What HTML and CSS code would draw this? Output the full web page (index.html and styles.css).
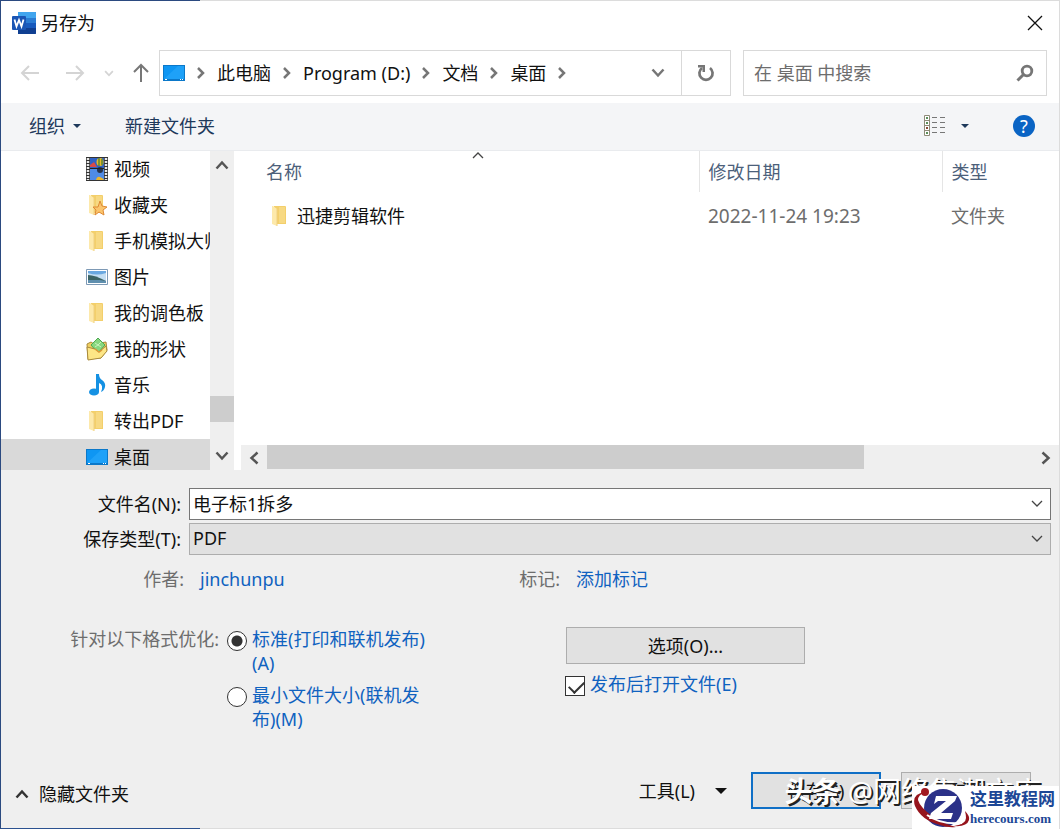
FILE: index.html
```html
<!DOCTYPE html>
<html lang="zh-CN">
<head>
  <meta charset="UTF-8" />
  <meta name="viewport" content="width=device-width, initial-scale=1.0"/>
  <title>另存为</title>
  <link rel="stylesheet" href="styles.css">
</head>
<body>
  <!-- shared icons -->
  <svg class="sprite" aria-hidden="true">
    <symbol id="folder" viewBox="0 0 22 22">
      <path d="M5 1h11q1 0 1 1v17H6z" fill="#f3cf6b"/>
      <path d="M10 2h6v16h-6z" fill="#f7d983"/>
      <path d="M3 1h1l4 3v17l-5-2z" fill="#fde9ab"/>
      <path d="M8 4v17" stroke="#f0d080" fill="none"/>
    </symbol>
    <symbol id="desktop" viewBox="0 0 22 16">
      <path d="M0 0h22v16H0z" fill="#0b78c9"/>
      <path d="M1 1h20v13H1z" fill="#0e96f3"/>
      <path d="M1 14L15 1h6v13z" fill="#1ea1f8"/>
      <path d="M2 14.500h2M17 14.500h1M19 14.500h1" stroke="#fff"/>
    </symbol>
    <symbol id="crumb" viewBox="0 0 8 12">
      <path d="M1 1l5 5-5 5" fill="none" stroke="#767676" stroke-width="2.500"/>
    </symbol>
    <symbol id="down" viewBox="0 0 12 8">
      <path d="M1 1l5 5 5-5" fill="none" stroke="#444" stroke-width="1.300"/>
    </symbol>
    <symbol id="thick" viewBox="0 0 14 10">
      <path d="M1.500 1.500L7 7.500l5.500-6" fill="none" stroke="currentColor" stroke-width="2.500"/>
    </symbol>
    <symbol id="caret" viewBox="0 0 12 6">
      <path d="M0 0h12L6 6z" fill="currentColor"/>
    </symbol>
  </svg>

  <div class="dialog">
    <header class="titlebar">
      <svg class="word" viewBox="0 0 24 22">
        <rect x="6" width="18" height="22" rx="1" fill="#185abd"/>
        <path d="M6 0h17q1 0 1 1v5H6z" fill="#41a5ee"/>
        <path d="M6 6h18v5H6z" fill="#2b7cd3"/>
        <path d="M6 16h18v5q0 1-1 1H6z" fill="#103f91"/>
        <rect y="4" width="14" height="14" rx="1" fill="#1a55b4"/>
        <path d="M2.500 7.500l2 7L7 8l2.500 6.500 2-7" fill="none" stroke="#fff" stroke-width="1.800"/>
      </svg>
      <h1>另存为</h1>
      <button class="close" aria-label="关闭">
        <svg width="16" height="16" viewBox="0 0 16 16"><path d="M1 1l14 14M15 1L1 15" stroke="#111" stroke-width="1.300"/></svg>
      </button>
    </header>

    <div class="navbar">
      <div class="history">
        <button aria-label="后退" disabled><svg width="20" height="16" viewBox="0 0 20 16"><path d="M19 8H2M9 1L2 8l7 7" fill="none" stroke="#d4d4d4" stroke-width="2"/></svg></button>
        <button aria-label="前进" disabled><svg width="20" height="16" viewBox="0 0 20 16"><path d="M1 8h17M11 1l7 7-7 7" fill="none" stroke="#d4d4d4" stroke-width="2"/></svg></button>
        <button class="recent" aria-label="最近" disabled><svg width="10" height="7"><use href="#thick"/></svg></button>
        <button aria-label="上移"><svg width="16" height="20" viewBox="0 0 16 20"><path d="M8 19V2M1 9l7-7 7 7" fill="none" stroke="#777" stroke-width="2"/></svg></button>
      </div>
      <div class="address">
        <nav class="crumbs">
          <svg width="22" height="16"><use href="#desktop"/></svg>
          <svg width="8" height="12"><use href="#crumb"/></svg>
          <a href="#">此电脑</a>
          <svg width="8" height="12"><use href="#crumb"/></svg>
          <a href="#">Program (D:)</a>
          <svg width="8" height="12"><use href="#crumb"/></svg>
          <a href="#">文档</a>
          <svg width="8" height="12"><use href="#crumb"/></svg>
          <a href="#">桌面</a>
          <svg width="8" height="12"><use href="#crumb"/></svg>
        </nav>
        <button class="previous" aria-label="以前的位置"><svg width="14" height="10"><use href="#thick"/></svg></button>
        <button class="refresh" aria-label="刷新">
          <svg width="18" height="18" viewBox="0 0 18 18">
            <path d="M13 4A6.600 6.600 0 1 1 5 4" fill="none" stroke="#767676" stroke-width="2.700"/>
            <path d="M1 1h7v7H5.500V3.500H1z" fill="#767676"/>
          </svg>
        </button>
      </div>
      <div class="search">
        <input type="text" placeholder="在 桌面 中搜索" aria-label="搜索">
        <svg width="18" height="18" viewBox="0 0 18 18"><circle cx="11" cy="7" r="4.800" fill="none" stroke="#767676" stroke-width="2.800"/><path d="M8 10l-6.500 6.500" stroke="#767676" stroke-width="3"/></svg>
      </div>
    </div>

    <div class="toolbar">
      <button>组织 <svg width="8" height="4"><use href="#caret"/></svg></button>
      <button>新建文件夹</button>
      <div class="tools-right">
        <button class="view" aria-label="更改视图">
          <svg width="22" height="22" viewBox="0 0 22 22">
            <path d="M.5.5h5v20h-5zM.5 5.500h5M.5 10.500h5M.5 15.500h5" fill="#fff" stroke="#8f8b78"/>
            <path d="M2 3h2M2 8h2M2 18h2" stroke="#5b8f5b" stroke-width="2"/>
            <path d="M2 13h2" stroke="#8a4a3a" stroke-width="2"/>
            <path d="M8 2.500h5M16 2.500h5M8 7.500h5M16 7.500h5M8 12.500h5M16 12.500h5M8 17.500h5M16 17.500h5" stroke="#777"/>
          </svg>
          <svg width="8" height="4"><use href="#caret"/></svg>
        </button>
        <button class="help" aria-label="帮助">?</button>
      </div>
    </div>

    <main class="browser">
      <ul class="tree">
        <li><a href="#">
          <svg width="22" height="24" viewBox="0 0 22 24">
            <path d="M0 0h22v24H0z" fill="#333"/>
            <path d="M2 1v22M20 1v22" stroke="#e8e8e8" stroke-width="2.500" stroke-dasharray="2 1"/>
            <path d="M4 1h14v10H4z" fill="#2f62c4"/>
            <path d="M4 12h14v11H4z" fill="#4f8be6"/>
            <path d="M4 8l4-3 3 5H4z" fill="#d84b48"/>
            <ellipse cx="14" cy="5" rx="3.500" ry="4" fill="#e5b82c"/>
            <path d="M13 1v8M16 2v6" stroke="#397a33" stroke-width="1.200"/>
            <ellipse cx="14" cy="13" rx="3" ry="3" fill="#26334d"/>
            <path d="M10 23q1-4 4-3t4 3z" fill="#ecb52b"/>
            <path d="M4 11.500h14" stroke="#222"/>
          </svg>视频</a></li>
        <li><a href="#">
          <svg width="22" height="22" viewBox="0 0 22 22">
            <use href="#folder" width="22" height="22"/>
            <path d="M14 7l2 5 5 1-4 3 1 5-5-3-4 3 1-5-3-3h5z" fill="#fbc56d" stroke="#de8a35"/>
          </svg>收藏夹</a></li>
        <li><a href="#"><svg width="22" height="22"><use href="#folder"/></svg>手机模拟大师</a></li>
        <li><a href="#">
          <svg width="22" height="16" viewBox="0 0 22 16">
            <path d="M.5.5h21v15H.5z" fill="#fff" stroke="#7d99b5"/>
            <path d="M2 2h18v12H2z" fill="#c3def3"/>
            <path d="M2 2h18v2q-9 3-18 0z" fill="#6aa8e0"/>
            <path d="M2 6q7 0 18 6v2H2z" fill="#3c6464"/>
            <path d="M2 11h12l6 1v2H2z" fill="#5f8fae"/>
          </svg>图片</a></li>
        <li><a href="#"><svg width="22" height="22"><use href="#folder"/></svg>我的调色板</a></li>
        <li><a href="#">
          <svg width="22" height="24" viewBox="0 0 22 24">
            <path d="M1 7l4-2 3 2 12-2 1 8-6 8-13 1z" fill="#f0cf61" stroke="#a98a3c"/>
            <path d="M5 8l7-7 7 7-7 8z" fill="#87d77f" stroke="#4ea953"/>
            <path d="M9 6l3 2 3-3M9 10l3-2 3 2" fill="none" stroke="#c8f3bd"/>
            <path d="M1 10l8 2 4 3 7-6 1 5-6 7-13 2z" fill="#fde686" stroke="#a98a3c"/>
            <path d="M9 12l4 3 3-2" fill="none" stroke="#dc9b38" stroke-width="1.500"/>
          </svg>我的形状</a></li>
        <li><a href="#">
          <svg width="22" height="22" viewBox="0 0 22 22">
            <ellipse cx="8" cy="18" rx="5" ry="3.600" fill="#1591e3"/>
            <path d="M10 0h3q0 4 3 6 4 3 3 7-1 4-4 5 3-7-2-9v9h-3z" fill="#1591e3"/>
          </svg>音乐</a></li>
        <li><a href="#"><svg width="22" height="22"><use href="#folder"/></svg>转出PDF</a></li>
        <li><a class="selected" href="#"><svg width="22" height="16"><use href="#desktop"/></svg>桌面</a></li>
      </ul>
      <div class="vscroll">
        <button class="flip" aria-label="向上滚动"><svg width="14" height="10"><use href="#thick"/></svg></button>
        <div class="vthumb"></div>
        <button aria-label="向下滚动"><svg width="14" height="10"><use href="#thick"/></svg></button>
      </div>

      <section class="files">
        <table>
          <thead>
            <tr>
              <th>名称<svg class="sort flip" width="12" height="8"><use href="#down"/></svg></th>
              <th class="date">修改日期</th>
              <th class="type">类型</th>
            </tr>
          </thead>
          <tbody>
            <tr>
              <td><a href="#"><svg width="22" height="22"><use href="#folder"/></svg>迅捷剪辑软件</a></td>
              <td class="modified">2022-11-24 19:23</td>
              <td>文件夹</td>
            </tr>
          </tbody>
        </table>
        <div class="hscroll">
          <button class="left" aria-label="向左滚动"><svg width="14" height="10"><use href="#thick"/></svg></button>
          <div class="htrack"><div class="hthumb"></div></div>
          <button class="right" aria-label="向右滚动"><svg width="14" height="10"><use href="#thick"/></svg></button>
        </div>
      </section>
    </main>

    <form class="save-form" onsubmit="return false">
      <div class="field">
        <label for="filename">文件名(N):</label>
        <div class="combo">
          <input type="text" id="filename" value="电子标1拆多">
          <svg width="12" height="8"><use href="#down"/></svg>
        </div>
      </div>
      <div class="field">
        <label for="filetype">保存类型(T):</label>
        <div class="combo">
          <select id="filetype"><option>PDF</option></select>
          <svg width="12" height="8"><use href="#down"/></svg>
        </div>
      </div>

      <div class="meta">
        <div class="meta-item"><span>作者:</span><a href="#">jinchunpu</a></div>
        <div class="meta-item tags"><span>标记:</span><a href="#">添加标记</a></div>
      </div>

      <div class="options">
        <div class="optimize" role="radiogroup" aria-labelledby="optimize-label">
          <span id="optimize-label">针对以下格式优化:</span>
          <div class="radios">
            <label><input type="radio" name="optimize" checked><span>标准(打印和联机发布)(A)</span></label>
            <label><input type="radio" name="optimize"><span>最小文件大小(联机发布)(M)</span></label>
          </div>
        </div>
        <div class="extras">
          <button class="push">选项(O)...</button>
          <label><input type="checkbox" checked><span>发布后打开文件(E)</span></label>
        </div>
      </div>

      <footer class="actions">
        <button class="hide-folders"><svg class="flip" width="14" height="10"><use href="#thick"/></svg><span>隐藏文件夹</span></button>
        <button class="tools">工具(L) <svg width="12" height="6"><use href="#caret"/></svg></button>
        <button class="push save">保存(S)</button>
        <button class="push">取消</button>
      </footer>
    </form>

    <div class="watermark"><b>头条</b> @网络集潮文库</div>
    <a class="brand" href="#">
      <svg width="58" height="42" viewBox="0 0 58 42">
        <circle cx="31" cy="21" r="19" fill="#2b3188"/>
        <path d="M13 5Q-1 7 3 19q6 14 25 19 8 3 16 2-12-3-24-11Q8 20 6 13q0-5 7-8z" fill="#96141c"/>
        <path d="M53 24q5 5 4 9-2 7-15 6 12-2 12-8 0-3-1-7z" fill="#96141c"/>
        <path d="M15 28q14 10 35 8" fill="none" stroke="#fff" stroke-width="2"/>
        <circle cx="13" cy="5" r="4" fill="#a01820"/>
        <path d="M24 9h21l-2 5-14 12h12l-2 6H17l2-6 15-12H26l-4 3z" fill="#fff"/>
      </svg>
      <span class="brand-text"><b>这里教程网</b><small>herecours.com</small></span>
    </a>
  </div>
</body>
</html>
```

FILE: styles.css
```css
* {
  box-sizing: border-box;
}

body {
  margin: 0;
  background: #efefef;
  font-family: "Noto Sans", "Noto Sans CJK SC", sans-serif;
  font-size: 18px;
  line-height: 24px;
  color: #111;
}

button, input, select {
  font: inherit;
  color: inherit;
  margin: 0;
}

button {
  display: flex;
  align-items: center;
  justify-content: center;
  padding: 0;
  border: none;
  background: none;
  white-space: nowrap;
}

a {
  color: inherit;
  text-decoration: none;
}

svg {
  flex: none;
}

.sprite {
  position: absolute;
  width: 0;
  height: 0;
}

.flip {
  transform: rotate(180deg);
}

.dialog {
  position: relative;
  display: flex;
  flex-direction: column;
  min-height: 100vh;
  border-left: 1px solid #2b4a80;
  border-right: 1px solid #dcdcdc;
  background: linear-gradient(#2b4a80, #2b4a80) 0 0 / 199px 1px no-repeat,
    linear-gradient(#2b5190, #2b5190) 0 100% / 199px 1px no-repeat,
    linear-gradient(#dcdcdc, #dcdcdc) 0 0 / 100% 1px no-repeat,
    linear-gradient(#dcdcdc, #dcdcdc) 0 100% / 100% 1px no-repeat,
    #efefef;
}

/* title */
.titlebar {
  display: flex;
  align-items: center;
  gap: 5px;
  height: 43px;
  margin-top: 1px;
  padding: 0 16px 0 11px;
  background: #fff;
}

.titlebar h1 {
  flex: 1;
  margin: 0;
  font-size: 18px;
  font-weight: 400;
}

.word {
  width: 24px;
  height: 22px;
}

/* navigation */
.navbar {
  display: flex;
  padding: 6px 12px 7px 0;
  background: #fff;
}

.history {
  display: flex;
  align-items: center;
  gap: 25px;
  width: 158px;
  padding-left: 19px;
}

.history .recent {
  margin: 0 -6px;
  color: #d4d4d4;
}

.address {
  display: flex;
  flex: 1;
  height: 46px;
  border: 1px solid #d9d9d9;
}

.crumbs {
  display: flex;
  flex: 1;
  align-items: center;
  gap: 12px;
  padding-left: 3px;
  white-space: nowrap;
}

.previous {
  width: 46px;
  color: #767676;
}

.refresh {
  width: 49px;
  border-left: 1px solid #d9d9d9;
}

.search {
  display: flex;
  align-items: center;
  width: 304px;
  height: 46px;
  margin-left: 12px;
  padding: 0 12px 0 10px;
  border: 1px solid #d9d9d9;
}

.search input {
  flex: 1;
  min-width: 0;
  padding: 0;
  border: none;
  outline: none;
  background: none;
}

.search input::placeholder {
  color: #6d6d6d;
}

/* toolbar */
.toolbar {
  display: flex;
  align-items: center;
  gap: 44px;
  height: 48px;
  padding: 0 24px 2px 28px;
  border-bottom: 1px solid #e9ebee;
  background: #f4f5f7;
  color: #1e395b;
}

.toolbar button {
  gap: 8px;
}

.tools-right {
  display: flex;
  gap: 44px;
  margin-left: auto;
}

.toolbar .view {
  gap: 15px;
}

.toolbar .help {
  width: 22px;
  height: 22px;
  border-radius: 50%;
  background: #0a64c4;
  color: #fff;
}

/* folder tree and file list */
.browser {
  display: flex;
  height: 319px;
  background: #fff;
}

.tree {
  width: 209px;
  margin: 0;
  padding: 0;
  overflow: hidden;
  list-style: none;
}

.tree a {
  display: flex;
  align-items: center;
  gap: 6px;
  height: 36px;
  padding-left: 85px;
  white-space: nowrap;
}

.tree .selected {
  background: #d9d9d9;
}

.vscroll {
  display: flex;
  flex-direction: column;
  width: 24px;
  background: #efefef;
  color: #555;
}

.vscroll button {
  height: 28px;
}

.vthumb {
  height: 26px;
  margin-top: auto;
  margin-bottom: 20px;
  background: #cdcdcd;
}

.files {
  display: flex;
  flex: 1;
  flex-direction: column;
  justify-content: space-between;
  min-width: 0;
  padding-left: 7px;
}

.files table {
  width: calc(100% - 16px);
  margin-left: 16px;
  border-collapse: collapse;
  table-layout: fixed;
}

.files th {
  position: relative;
  height: 41px;
  padding: 0 9px;
  color: #4c607a;
  font-weight: 400;
  text-align: left;
}

.files .date {
  width: 243px;
  border-left: 1px solid #e5e5e5;
}

.files .type {
  width: 117px;
  border-left: 1px solid #e5e5e5;
}

.sort {
  position: absolute;
  top: 0;
  left: calc(50% - 6px);
}

.files td {
  height: 48px;
  padding: 0 9px;
  color: #6d6d6d;
}

.files .modified {
  font-size: 19px;
}

.files td a {
  display: flex;
  align-items: center;
  gap: 6px;
  padding-left: 3px;
  color: #111;
}

.hscroll {
  display: flex;
  height: 25px;
  background: #efefef;
  color: #555;
}

.hscroll button {
  width: 26px;
}

.left svg {
  transform: rotate(90deg);
}

.right svg {
  transform: rotate(-90deg);
}

.htrack {
  flex: 1;
}

.hthumb {
  width: 78%;
  height: 24px;
  background: #cdcdcd;
}

/* save form */
.save-form {
  display: flex;
  flex: 1;
  flex-direction: column;
  padding-top: 18px;
}

.field {
  display: flex;
  align-items: center;
  gap: 8px;
  margin-bottom: 3px;
  padding-right: 8px;
}

.field label {
  width: 180px;
  text-align: right;
}

.combo {
  position: relative;
  flex: 1;
}

.combo input, .combo select {
  display: block;
  width: 100%;
  height: 32px;
  padding: 0 28px 2px 3px;
  border: 1px solid #767676;
  border-radius: 0;
  outline: none;
  appearance: none;
  background: #fff;
}

.combo select {
  border-color: #adadad;
  background: #e1e1e1;
}

.combo svg {
  position: absolute;
  top: 12px;
  right: 8px;
  pointer-events: none;
}

.meta {
  display: flex;
  margin-top: 9px;
}

.meta-item {
  display: flex;
  gap: 16px;
  width: 376px;
}

.meta-item span {
  width: 183px;
  color: #6d6d6d;
  text-align: right;
}

.meta-item a {
  color: #0f62c0;
}

.options {
  display: flex;
  margin-top: 36px;
}

.optimize {
  display: flex;
  gap: 8px;
  width: 564px;
  color: #6d6d6d;
}

#optimize-label {
  width: 218px;
  text-align: right;
}

.radios {
  display: flex;
  flex-direction: column;
  gap: 8px;
  width: 204px;
}

.options label {
  display: flex;
  gap: 5px;
  color: #0f62c0;
}

.options label input {
  flex: none;
  width: 20px;
  height: 20px;
  margin-top: 4px;
  border: 1px solid #333;
  appearance: none;
  background: #fff;
}

.options input[type="radio"] {
  border-radius: 50%;
}

.options input[type="radio"]:checked {
  background: radial-gradient(circle, #333 5px, #fff 6px);
}

.options input[type="checkbox"]:checked::before {
  content: "";
  display: block;
  width: 13px;
  height: 7px;
  margin: 4px 3px;
  border-left: 2px solid #333;
  border-bottom: 2px solid #333;
  transform: rotate(-45deg);
}

.extras {
  display: flex;
  flex-direction: column;
  gap: 8px;
}

.push {
  width: 130px;
  height: 37px;
  border: 1px solid #adadad;
  background: #e1e1e1;
}

.extras .push {
  width: 239px;
  margin-left: 1px;
}

.actions {
  display: flex;
  align-items: center;
  gap: 20px;
  margin-top: auto;
  padding: 0 28px 20px 14px;
}

.hide-folders {
  gap: 10px;
  margin-right: auto;
  padding-top: 6px;
  color: #333;
}

.hide-folders span {
  color: #111;
}

.tools {
  gap: 20px;
  margin-right: 4px;
}

.save {
  border: 2px solid #0f6fc6;
}

/* overlays in the corner */
.watermark {
  position: absolute;
  right: 18px;
  bottom: 20px;
  color: #fff;
  font-size: 28px;
  line-height: 36px;
  text-shadow: 2px 2px 0 #222;
  white-space: nowrap;
}

.brand {
  position: absolute;
  right: 0;
  bottom: 0;
  display: flex;
  align-items: center;
  height: 43px;
  padding-right: 4px;
  background: #fff;
  color: #1c4796;
}

.brand-text {
  display: flex;
  flex-direction: column;
  font-family: "Liberation Serif", "Noto Sans CJK SC", serif;
}

.brand-text b {
  font-size: 17px;
  line-height: 22px;
}

.brand-text small {
  font-size: 13px;
  font-weight: 700;
  line-height: 16px;
}
```
